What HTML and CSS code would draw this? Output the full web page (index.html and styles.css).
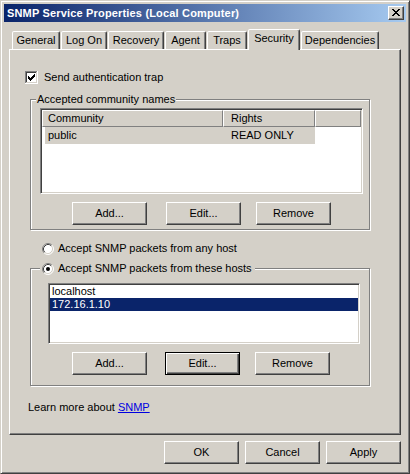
FILE: index.html
```html
<!DOCTYPE html>
<html>
<head>
<meta charset="utf-8">
<title>SNMP Service Properties</title>
<link rel="stylesheet" href="styles.css">
</head>
<body>
<div class="window">
  <div class="titlebar">
    <span class="title">SNMP Service Properties (Local Computer)</span>
    <div class="close-btn">
      <svg width="14" height="12" viewBox="0 0 14 12" shape-rendering="crispEdges"><path fill="#000" d="M3 2h2v1h-2z M9 2h2v1h-2z M4 3h2v1h-2z M8 3h2v1h-2z M5 4h4v1h-4z M6 5h2v1h-2z M5 6h4v1h-4z M4 7h2v1h-2z M8 7h2v1h-2z M3 8h2v1h-2z M9 8h2v1h-2z"/></svg>
    </div>
  </div>
  <div class="body">
    <div class="tabs">
      <div class="tab t-general">General</div>
      <div class="tab t-logon">Log On</div>
      <div class="tab t-recovery">Recovery</div>
      <div class="tab t-agent">Agent</div>
      <div class="tab t-traps">Traps</div>
      <div class="tab selected t-security">Security</div>
      <div class="tab t-deps">Dependencies</div>
    </div>
    <div class="panel">
      <div class="check-row">
        <svg class="checkbox" width="13" height="13" viewBox="0 0 13 13" shape-rendering="crispEdges">
          <rect x="0" y="0" width="13" height="13" fill="#fff"/>
          <path d="M0 0h13v1h-13z M0 0h1v13h-1z" fill="#808080"/>
          <path d="M1 1h11v1h-11z M1 1h1v11h-1z" fill="#404040"/>
          <path d="M0 12h13v1h-13z M12 0h1v13h-1z" fill="#fff"/>
          <path d="M1 11h11v1h-11z M11 1h1v11h-1z" fill="#D4D0C8"/>
          <path fill="#000" d="M9 3h1v1h-1z M8 4h2v1h-2z M3 5h1v1h-1z M7 5h3v1h-3z M3 6h2v1h-2z M6 6h3v1h-3z M3 7h5v1h-5z M4 8h3v1h-3z M5 9h1v1h-1z"/>
        </svg>
        <span class="check-label">Send authentication trap</span>
      </div>

      <div class="group group-comm">
        <div class="group-title">Accepted community names</div>
        <div class="listview">
          <div class="lv-header">
            <div class="lv-col col-1">Community</div>
            <div class="lv-col col-2">Rights</div>
            <div class="lv-col col-3"></div>
          </div>
          <div class="lv-row">
            <div class="lv-cell cell-1">public</div>
            <div class="lv-cell cell-2">READ ONLY</div>
          </div>
        </div>
        <div class="btn-row">
          <div class="btn btn-add">Add...</div>
          <div class="btn btn-edit">Edit...</div>
          <div class="btn btn-remove">Remove</div>
        </div>
      </div>

      <div class="radio-row radio-any">
        <svg class="radio" width="12" height="12" viewBox="0 0 12 12">
          <circle cx="6" cy="6" r="5" fill="#fff"/>
          <path d="M2.11 9.89 A5.5 5.5 0 0 1 9.89 2.11" stroke="#808080" fill="none"/>
          <path d="M9.89 2.11 A5.5 5.5 0 0 1 2.11 9.89" stroke="#fff" fill="none"/>
          <path d="M2.82 9.18 A4.5 4.5 0 0 1 9.18 2.82" stroke="#404040" fill="none"/>
          <path d="M9.18 2.82 A4.5 4.5 0 0 1 2.82 9.18" stroke="#D4D0C8" fill="none"/>
        </svg>
        <span class="radio-label">Accept SNMP packets from any host</span>
      </div>

      <div class="group group-hosts">
        <div class="group-title radio-row radio-these">
          <svg class="radio" width="12" height="12" viewBox="0 0 12 12">
            <circle cx="6" cy="6" r="5" fill="#fff"/>
            <path d="M2.11 9.89 A5.5 5.5 0 0 1 9.89 2.11" stroke="#808080" fill="none"/>
            <path d="M9.89 2.11 A5.5 5.5 0 0 1 2.11 9.89" stroke="#fff" fill="none"/>
            <path d="M2.82 9.18 A4.5 4.5 0 0 1 9.18 2.82" stroke="#404040" fill="none"/>
            <path d="M9.18 2.82 A4.5 4.5 0 0 1 2.82 9.18" stroke="#D4D0C8" fill="none"/>
            <circle cx="6" cy="6" r="2" fill="#000"/>
          </svg>
          <span class="radio-label">Accept SNMP packets from these hosts</span>
        </div>
        <div class="listbox">
          <div class="lb-item">localhost</div>
          <div class="lb-item selected">172.16.1.10</div>
        </div>
        <div class="btn-row">
          <div class="btn btn-add">Add...</div>
          <div class="btn btn-edit default">Edit...</div>
          <div class="btn btn-remove">Remove</div>
        </div>
      </div>

      <div class="learn">Learn more about <a class="link" href="#">SNMP</a></div>
    </div>
    <div class="dialog-buttons">
      <div class="btn">OK</div>
      <div class="btn">Cancel</div>
      <div class="btn">Apply</div>
    </div>
  </div>
</div>
</body>
</html>
```

FILE: styles.css
```css
* { box-sizing: border-box; }
html, body { margin: 0; padding: 0; }
body {
  background: #D4D0C8;
  font-family: "Liberation Sans", Arial, sans-serif;
  font-size: 11px;
  color: #000;
}

.window {
  width: 410px;
  height: 474px;
  background: #D4D0C8;
  border: 1px solid;
  border-color: #D4D0C8 #404040 #404040 #D4D0C8;
  box-shadow: inset 1px 1px 0 #fff, inset -1px -1px 0 #808080;
  padding: 3px;
  display: flex;
  flex-direction: column;
}

.titlebar {
  height: 18px;
  flex: none;
  background: linear-gradient(to right, #0A246A, #A6CAF0);
  display: flex;
  align-items: center;
  justify-content: space-between;
  padding: 0 2px 0 3px;
}
.title {
  color: #fff;
  font-weight: bold;
  font-size: 11px;
  letter-spacing: 0.17px;
  white-space: nowrap;
}
.close-btn {
  width: 16px;
  height: 14px;
  background: #D4D0C8;
  border: 1px solid;
  border-color: #fff #404040 #404040 #fff;
  box-shadow: inset -1px -1px 0 #808080;
  display: flex;
}

.body {
  flex: 1;
  display: flex;
  flex-direction: column;
  padding: 7px 5px 0 5px;
}

/* tabs */
.tabs {
  height: 20px;
  flex: none;
  display: flex;
  align-items: flex-end;
  gap: 1px;
  padding-left: 3px;
}
.tab {
  height: 18px;
  border: 1px solid;
  border-bottom: none;
  border-color: #fff #404040 transparent #fff;
  box-shadow: inset -1px 0 0 #808080;
  border-radius: 2px 2px 0 0;
  background: #D4D0C8;
  text-align: center;
  line-height: 17px;
  white-space: nowrap;
}
.tab.selected {
  height: 21px;
  margin-bottom: -1px;
  position: relative;
  z-index: 1;
  line-height: 16px;
}
.t-general { width: 48px; }
.t-logon { width: 46px; }
.t-recovery { width: 56px; }
.t-agent { width: 41px; }
.t-traps { width: 40px; }
.t-security { width: 52px; }
.t-deps { width: 78px; }

/* panel */
.panel {
  height: 386px;
  flex: none;
  border: 1px solid;
  border-color: #fff #404040 #404040 #fff;
  box-shadow: inset -1px -1px 0 #808080;
  display: flex;
  flex-direction: column;
  align-items: flex-start;
  padding-top: 21px;
}

.check-row {
  display: flex;
  align-items: center;
  height: 13px;
  margin-left: 15px;
}
.checkbox { display: block; flex: none; }
.check-label { margin-left: 6px; line-height: 13px; }

.group {
  width: 340px;
  margin-left: 20px;
  border: 1px solid #808080;
  box-shadow: inset 1px 1px 0 #fff, 1px 1px 0 #fff;
  display: flex;
  flex-direction: column;
  align-items: flex-start;
}
.group-comm { height: 131px; margin-top: 15px; }
.group-hosts { height: 118px; margin-top: 13px; }

.group-title {
  margin-top: -7px;
  margin-left: 5px;
  padding: 0 1px;
  line-height: 13px;
  height: 13px;
  background: #D4D0C8;
  white-space: nowrap;
}

.listview {
  width: 323px;
  height: 86px;
  margin: 2px 0 0 9px;
  border: 1px solid;
  border-color: #808080 #fff #fff #808080;
  box-shadow: inset 1px 1px 0 #404040, inset -1px -1px 0 #D4D0C8;
  padding: 1px;
  background: #fff;
}
.lv-header {
  display: flex;
  height: 17px;
}
.lv-col {
  height: 17px;
  background: #D4D0C8;
  border: 1px solid;
  border-color: #fff #808080 #808080 #fff;
  line-height: 15px;
  white-space: nowrap;
}
.col-1 { width: 181px; padding-left: 5px; }
.col-2 { width: 92px; padding-left: 7px; }
.col-3 { flex: 1; }

.lv-row {
  display: flex;
  height: 17px;
  width: 270px;
  margin-left: 3px;
  background: #D4D0C8;
  line-height: 17px;
}
.cell-1 { width: 178px; padding-left: 3px; }
.cell-2 { padding-left: 8px; }

.btn-row {
  display: flex;
  margin-left: 41px;
}
.group-comm .btn-row { margin-top: 8px; }
.group-hosts .btn-row { margin-top: 8px; }
.btn-row .btn-edit { margin-left: 19px; }
.btn-row .btn-remove { margin-left: 15px; }
.group-hosts .btn-row .btn-edit { margin-left: 18px; }

.btn {
  width: 75px;
  height: 23px;
  flex: none;
  background: #D4D0C8;
  border: 1px solid;
  border-color: #fff #404040 #404040 #fff;
  box-shadow: inset -1px -1px 0 #808080;
  text-align: center;
  line-height: 21px;
}
.btn.default {
  border-color: #000;
  box-shadow: inset 1px 1px 0 #fff, inset -1px -1px 0 #404040, inset -2px -2px 0 #808080;
}

.radio-row {
  display: flex;
  align-items: center;
  height: 13px;
  line-height: 13px;
}
.radio { display: block; flex: none; }
.radio-label { margin-left: 4px; white-space: nowrap; }
.radio-any { margin: 12px 0 0 32px; }
.group-title.radio-these {
  margin-left: 9px;
  padding: 0 3px 0 2px;
}

.listbox {
  width: 312px;
  height: 61px;
  margin: 8px 0 0 17px;
  border: 1px solid;
  border-color: #808080 #fff #fff #808080;
  box-shadow: inset 1px 1px 0 #404040, inset -1px -1px 0 #D4D0C8;
  padding: 1px;
  background: #fff;
}
.lb-item {
  height: 13px;
  line-height: 13px;
  padding-left: 2px;
  white-space: nowrap;
}
.lb-item.selected {
  background: #0A246A;
  color: #fff;
}

.learn {
  margin: 15px 0 0 18px;
  line-height: 13px;
}
.link {
  color: #0000E0;
  text-decoration: underline;
}

.dialog-buttons {
  display: flex;
  justify-content: flex-end;
  gap: 6px;
  margin-top: 6px;
}
```
